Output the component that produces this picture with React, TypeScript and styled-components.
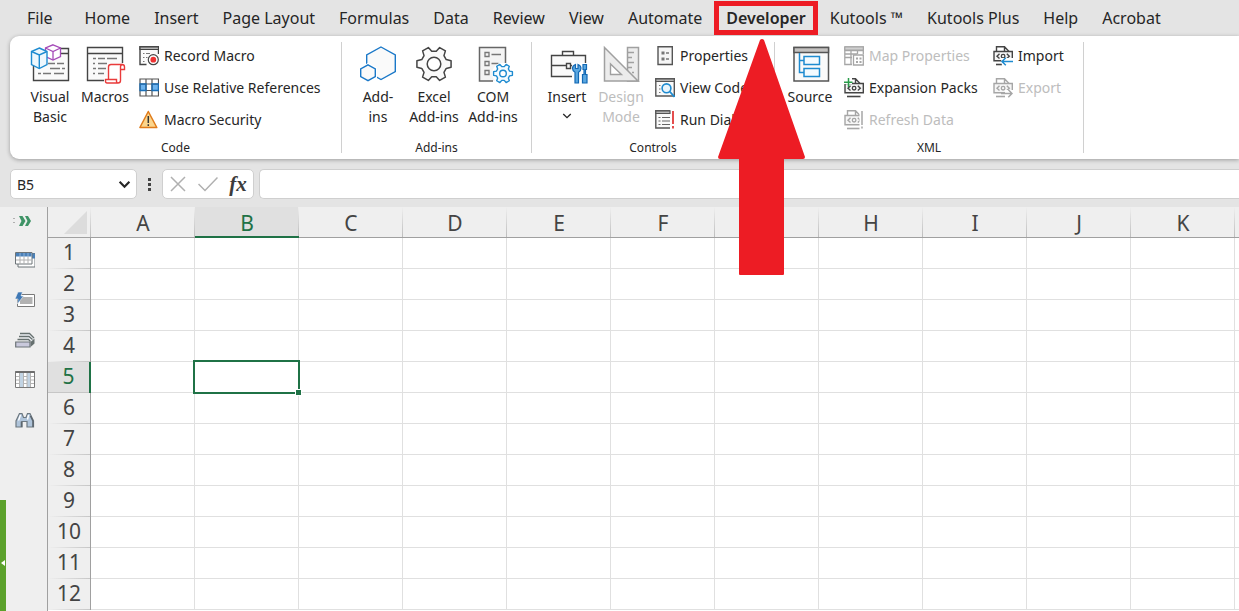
import React from "react";
import styled, { createGlobalStyle, css } from "styled-components";

const GlobalStyle = createGlobalStyle`
  *, *::before, *::after { box-sizing: border-box; }
  html, body { margin: 0; padding: 0; }
  body {
    background: #e4e4e4;
    color: #262626;
    font-family: "Noto Sans", "Open Sans", sans-serif;
    font-size: 14px;
    overflow: hidden;
  }
  button, input { font: inherit; color: inherit; }
  svg { display: block; flex: none; }
`;

const RED = "#ed1c24";
const GREEN = "#1f7246";
const BLUE = "#1e8bd0";
const DARK = "#444444";
const PALE = "#a6a6a6";

const Page = styled.div`
  display: flex;
  flex-direction: column;
  min-height: 100vh;
`;

/* ---------- Ribbon tabs ---------- */

const TabBar = styled.nav`
  display: flex;
  height: 36px;
  padding-left: 15px;
`;

const Tab = styled.button<{ $active?: boolean }>`
  position: relative;
  flex: none;
  height: 36px;
  padding: 0 12px;
  border: 0;
  background: none;
  font-size: 16px;
  line-height: 36px;
  white-space: nowrap;
  font-weight: ${(p) => (p.$active ? 600 : 400)};
  &:first-child { margin-right: 8px; }
`;

const Callout = styled.span`
  position: absolute;
  z-index: 5;
  top: 1px;
  bottom: 1px;
  left: 0;
  right: 0;
  border: 5px solid ${RED};
  pointer-events: none;
`;

const Arrow = styled.svg`
  position: absolute;
  z-index: 5;
  top: 38px;
  left: 4px;
  pointer-events: none;
`;

/* ---------- Ribbon ---------- */

const Ribbon = styled.section`
  display: flex;
  height: 123px;
  margin-left: 10px;
  background: #ffffff;
  border-radius: 9px 0 0 9px;
  box-shadow: 0 1px 4px rgba(0, 0, 0, 0.32);
`;

const Group = styled.div<{ $width: number; $indent: number }>`
  display: flex;
  flex-direction: column;
  flex: 0 0 ${(p) => p.$width}px;
  min-width: 0;
  padding-top: 4px;
  & > div { padding-left: ${(p) => p.$indent}px; }
`;

const GroupBody = styled.div`
  display: flex;
  height: 96px;
`;

const GroupLabel = styled.span`
  text-align: center;
  font-size: 12px;
  line-height: 23px;
`;

const Divider = styled.div`
  flex: 0 0 1px;
  margin: 6px 0;
  background: #d0d0d0;
`;

const BigTool = styled.button<{ $width: number }>`
  display: flex;
  flex-direction: column;
  align-items: center;
  flex: 0 0 ${(p) => p.$width}px;
  padding: 4px 0 0;
  border: 0;
  background: none;
  line-height: 20px;
  white-space: nowrap;
  &:disabled { color: #bdbdbd; }
  & > svg:first-child { margin-bottom: 3px; }
`;

const MenuMark = styled.span`
  display: flex;
  align-items: center;
  height: 18px;
`;

const Stack = styled.div<{ $width?: number; $flush?: boolean }>`
  display: flex;
  flex-direction: column;
  margin-left: ${(p) => (p.$flush ? 0 : 7)}px;
  ${(p) => p.$width && css`flex: 0 0 ${p.$width}px;`}
`;

const SmallTool = styled.button`
  display: flex;
  align-items: center;
  gap: 5px;
  height: 32px;
  padding: 0;
  border: 0;
  background: none;
  line-height: 20px;
  white-space: nowrap;
  &:disabled { color: #bdbdbd; }
`;

/* ---------- Formula bar ---------- */

const FormulaRow = styled.div`
  display: flex;
  align-items: flex-start;
  height: 48px;
  padding: 10px 0 0 10px;
`;

const boxed = css`
  height: 30px;
  background: #ffffff;
  border: 1px solid #cfcfcf;
  border-radius: 5px;
`;

const NameBox = styled.div`
  ${boxed}
  display: flex;
  align-items: center;
  flex: 0 0 127px;
  min-width: 0;
`;

const NameInput = styled.input`
  flex: 1;
  width: 100%;
  min-width: 0;
  padding: 0 0 0 6px;
  border: 0;
  background: none;
  outline: none;
`;

const IconButton = styled.button<{ $size: number }>`
  display: flex;
  align-items: center;
  justify-content: center;
  flex: 0 0 ${(p) => p.$size}px;
  height: 28px;
  padding: 0;
  border: 0;
  background: none;
`;

const Dots = styled.div`
  display: flex;
  flex-direction: column;
  align-items: center;
  justify-content: center;
  gap: 2px;
  flex: 0 0 25px;
  height: 30px;
  & > i { width: 3px; height: 3px; background: #444444; }
`;

const FxBox = styled.div`
  ${boxed}
  display: flex;
  flex: 0 0 92px;
  margin-right: 5px;
`;

const FxText = styled.span`
  font-family: "Liberation Serif", serif;
  font-style: italic;
  font-weight: 700;
  font-size: 21px;
  line-height: 24px;
  color: #3c3c3c;
`;

const FormulaInput = styled.input`
  ${boxed}
  flex: 1;
  min-width: 0;
  padding: 0 8px;
  border-right: 0;
  border-radius: 5px 0 0 5px;
  outline: none;
`;

/* ---------- Workspace ---------- */

const Workspace = styled.main`
  display: flex;
  flex: 1;
`;

const SidePane = styled.aside`
  position: relative;
  display: flex;
  flex-direction: column;
  flex: 0 0 48px;
  padding-left: 2px;
  background: #efefef;
  border-right: 1px solid #a0a0a0;
`;

const Expander = styled.button`
  display: flex;
  align-items: center;
  justify-content: center;
  height: 28px;
  margin-bottom: 5px;
  padding: 0 3px 0 0;
  border: 0;
  background: none;
`;

const PaneButton = styled.button`
  display: flex;
  align-items: center;
  justify-content: center;
  height: 40px;
  padding: 0 0 0 1px;
  border: 0;
  background: none;
`;

const PaneToggle = styled.button`
  position: absolute;
  left: 0;
  bottom: 0;
  display: flex;
  align-items: center;
  width: 6px;
  height: 111px;
  padding: 14px 0 0;
  border: 0;
  background: #5ba12b;
`;

const SheetArea = styled.div`
  flex: 1;
  min-width: 0;
  overflow: hidden;
  background: #ffffff;
`;

const Sheet = styled.table`
  table-layout: fixed;
  width: 1291px;
  border-collapse: separate;
  border-spacing: 0;
`;

const headCell = css`
  height: 31px;
  padding: 0;
  font-size: 21px;
  font-weight: 400;
  color: #444444;
  text-align: center;
  vertical-align: top;
  background: #efefef;
`;

const ColumnHead = styled.th<{ $active?: boolean }>`
  ${headCell}
  padding-top: 3px;
  line-height: 26px;
  border-bottom: 1px solid #a0a0a0;
  background: linear-gradient(#efefef, #bdbdbd) right / 1px 100% no-repeat #efefef;
  ${(p) =>
    p.$active &&
    css`
      color: ${GREEN};
      background: linear-gradient(#efefef, #bdbdbd) right / 1px 100% no-repeat #e0e0e0;
      border-bottom: 2px solid ${GREEN};
    `}
`;

const RowHead = styled.th<{ $active?: boolean }>`
  ${headCell}
  padding-top: 1px;
  line-height: 27px;
  border-right: 1px solid #a0a0a0;
  background: linear-gradient(to right, #efefef, #c6c6c6) bottom / 100% 1px no-repeat #efefef;
  ${(p) =>
    p.$active &&
    css`
      color: ${GREEN};
      background: linear-gradient(#c6c6c6, #c6c6c6) bottom / 100% 1px no-repeat #e0e0e0;
      border-right: 2px solid ${GREEN};
    `}
`;

const Corner = styled.th`
  ${headCell}
  padding-top: 4px;
  border-bottom: 1px solid #a0a0a0;
  background: linear-gradient(#efefef, #bdbdbd) right / 1px 100% no-repeat #efefef;
  & > svg { margin: 0 0 0 16px; }
`;

const Cell = styled.td`
  position: relative;
  height: 31px;
  padding: 0;
  border-right: 1px solid #e0e0e0;
  border-bottom: 1px solid #e0e0e0;
`;

const Selection = styled.div`
  position: absolute;
  z-index: 2;
  inset: -2px;
  border: 2px solid ${GREEN};
  &::after {
    content: "";
    position: absolute;
    right: -4px;
    bottom: -4px;
    width: 7px;
    height: 7px;
    background: ${GREEN};
    border: 1px solid #ffffff;
  }
`;

/* ---------- Icons ---------- */

const Big = ({ children }: { children: React.ReactNode }) => (
  <svg width="40" height="40" viewBox="0 0 40 40" fill="none" overflow="visible" aria-hidden="true">
    {children}
  </svg>
);

const Small = ({ children }: { children: React.ReactNode }) => (
  <svg width="20" height="20" viewBox="0 0 20 20" fill="none" aria-hidden="true">
    {children}
  </svg>
);

const gearPath = (cx: number, cy: number, outer: number, root: number) => {
  const pts: string[] = [];
  for (let i = 0; i < 6; i++) {
    const steps: [number, number][] = [
      [-20, root],
      [-11, outer],
      [11, outer],
      [20, root],
    ];
    for (const [a, r] of steps) {
      const t = ((i * 60 + a) * Math.PI) / 180;
      pts.push(`${(cx + r * Math.cos(t)).toFixed(2)} ${(cy + r * Math.sin(t)).toFixed(2)}`);
    }
  }
  return `M${pts.join("L")}Z`;
};

const VisualBasicIcon = () => (
  <Big>
    <path d="M3.5 22V36.500H38.500V4.500H30V9.500H38.500" fill="#fafafa" stroke={DARK} strokeWidth="1.4" />
    <path d="M27 19.500h7M18 19.500h7M20 24.500h10M32 24.500h3M8 29.500h3M13 29.500h8M24 29.500h10" stroke="#777" strokeWidth="1.3" />
    <path d="M23 .8L30.500 4V12.500L23 16L15.500 12.500V4Z" fill="#fff" stroke="#a54bb8" strokeWidth="1.3" />
    <path d="M15.500 4L23 7.500L30.500 4M23 7.500V16" stroke="#a54bb8" strokeWidth="1.3" />
    <path d="M9.300 4L17 7.500V20.500L9.300 24.500L1.500 20.500V7.500Z" fill="#eef7fd" stroke={BLUE} strokeWidth="1.4" />
    <path d="M1.500 7.500L9.300 11L17 7.500M9.300 11V24.500" stroke={BLUE} strokeWidth="1.4" />
  </Big>
);

const MacrosIcon = () => (
  <Big>
    <path d="M2.500 3.500H37.500V36.500H2.500Z" fill="#fafafa" />
    <path d="M20 36.500H2.500V3.500H37.500V19M2.500 9.500H37.500" stroke={DARK} strokeWidth="1.4" />
    <path d="M8 14.500h3M13 14.500h7M22 14.500h10M8 19.500h2M13 19.500h9M8 24.500h3M13 24.500h8M8 29.500h2M13 29.500h6" stroke="#777" strokeWidth="1.300" />
    <path d="M22.500 33V23q0-2.500 2.500-2.500H37.500V37q0 3-3 3H19V33Z" fill="#fff" />
    <path d="M23.500 35V23q0-2.500 2.500-2.500H37q2.500 0 2.500 2.500v2.500H35.500" stroke="#e93b3b" strokeWidth="1.4" />
    <path d="M35.500 25.500V23q0-2.500 2-2.500M35.500 25V36.500q0 2.500-2.500 2.500H22q-1.500 0-1.500-2V35.500H31.500V37q0 2 1.500 2" stroke="#e93b3b" strokeWidth="1.4" />
  </Big>
);

const AddInsIcon = () => (
  <Big>
    <path d="M23 3L37.300 11V27.500L23 35.500L8.700 27.500V11Z" fill="#fafafa" stroke="#1a78c8" strokeWidth="1.400" />
    <path d="M10 19L19 23.500V34L10 39L1 34V23.500Z" fill="#fff" />
    <path d="M10 20.800L17.300 24.800V32.700L10 36.700L2.700 32.700V24.800Z" fill="#fafafa" stroke="#1a78c8" strokeWidth="1.400" />
  </Big>
);

const ExcelAddInsIcon = () => (
  <Big>
    <path d={gearPath(20, 20, 17.4, 13)} fill="#fafafa" stroke={DARK} strokeWidth="1.5" strokeLinejoin="round" />
    <circle cx="20" cy="20" r="6.800" fill="#fff" stroke={DARK} strokeWidth="1.500" />
  </Big>
);

const ComAddInsIcon = () => (
  <Big>
    <path d="M6.500 3.500H32.500V37H6.500Z" fill="#f4f4f4" />
    <path d="M20 37H6.500V3.500H32.500V19" stroke="#666" strokeWidth="1.500" />
    <path d="M12 8.500h4v4h-4ZM12 17.500h4v4h-4ZM12 26.500h4v4h-4Z" stroke="#777" strokeWidth="1.300" />
    <path d="M18.500 10.500h9.500M18.500 19.500h7" stroke="#777" strokeWidth="1.300" />
    <circle cx="30" cy="29.500" r="10.800" fill="#fff" />
    <path d={gearPath(30, 29.5, 9.6, 7)} fill="#f4fbff" stroke={BLUE} strokeWidth="1.4" strokeLinejoin="round" />
    <circle cx="30" cy="29.500" r="3.300" fill="#fff" stroke={BLUE} strokeWidth="1.400" />
  </Big>
);

const InsertIcon = () => (
  <Big>
    <path d="M4.500 11.500H38.500V32.500H4.500Z" fill="#fafafa" />
    <path d="M38.500 19V11.500H4.500V32.500H25M15.500 11.500V7.500H26.500V11.500M4.500 21.500H19M23.500 21.500H26" stroke={DARK} strokeWidth="1.400" />
    <path d="M19.500 19.500h4v5h-4Z" stroke={DARK} strokeWidth="1.400" />
    <path d="M24.500 19h15.500v21h-13V30Z" fill="#fff" />
    <path d="M28.500 20.500q-3 1.200-3 3.800q0 2.500 2.500 4V39h3.500V28.300q2.500-1.500 2.500-4q0-2.600-3-3.800v4h-2.500Z" fill="#5aa7e0" stroke="#1268b4" strokeWidth="1.200" />
    <path d="M36 20.500h3.500v5h-1v5h1.500v8.500h-4.500v-8.500h1.500v-5h-1Z" fill="#5aa7e0" stroke="#1268b4" strokeWidth="1.200" />
  </Big>
);

const DesignIcon = () => (
  <Big>
    <path d="M26.500 3.500H37.500V37H26.500Z" fill="#ececec" stroke="#a0a0a0" strokeWidth="1.500" />
    <path d="M27 8.500h6M27 13.500h4M27 18.500h6M27 23.500h4M31 28.500h2" stroke="#a0a0a0" strokeWidth="1.300" />
    <path d="M3.500 3.500V37H37Z" fill="#ececec" stroke="#a0a0a0" strokeWidth="1.500" />
    <path d="M9.500 20V30.500H20.500Z" fill="#fff" stroke="#a0a0a0" strokeWidth="1.400" />
  </Big>
);

const SourceIcon = () => (
  <Big>
    <path d="M4 3.500H38.500V37H4Z" fill="#fafafa" stroke="#555" strokeWidth="1.500" />
    <path d="M4 3.500H38.500V8.500H4Z" fill="#c4c2c0" stroke="#555" strokeWidth="1.400" />
    <path d="M9.500 9V28.500H14M9.500 16.500H14" stroke={BLUE} strokeWidth="1.500" />
    <path d="M14 12.500H29.500V20.500H14ZM14 24.500H29.500V32.500H14Z" fill="#f4fbff" stroke={BLUE} strokeWidth="1.500" />
  </Big>
);

const RecordIcon = () => (
  <Small>
    <path d="M7.500 18.500H1V.8H19.500V8" fill="#fafafa" stroke={DARK} strokeWidth="1.400" />
    <path d="M1 .8H19.500V3.500H1Z" fill="#b5b5b5" stroke={DARK} strokeWidth="1.200" />
    <path d="M4 7.500h1.500M7 7.500h4M4 11.500h1.500M4 15.500h1.500M7 11.500h1.500" stroke="#777" />
    <circle cx="14.300" cy="13.700" r="5" fill="#fff" stroke={DARK} strokeWidth="1.200" />
    <circle cx="14.300" cy="13.700" r="2.900" fill="#ee3333" />
  </Small>
);

const RelativeIcon = () => (
  <Small>
    <path d="M1 1H19.500V18H1Z" fill="#fff" />
    <path d="M1 6H7V12.500H1ZM13 6H19.500V12.500H13Z" fill="#6db3ee" />
    <path d="M1 1H19.500V18H1ZM7 1V18M13 1V18M1 6H19.500M1 12.500H19.500" stroke="#555" strokeWidth="1.200" />
    <path d="M1 6H7V12.500H1ZM13 6H19.500V12.500H13Z" stroke="#1a6fb8" strokeWidth="1.300" />
  </Small>
);

const SecurityIcon = () => (
  <Small>
    <path d="M9.300 1.500L17.800 17.500H.9Z" fill="#fbd58c" stroke="#e07b1a" strokeWidth="1.500" strokeLinejoin="round" />
    <path d="M9.300 6V13M9.300 14.200V16" stroke="#333" strokeWidth="1.500" />
  </Small>
);

const PropertiesIcon = () => (
  <Small>
    <path d="M3 .7H17.300V18.500H3Z" fill="#f6f6f6" stroke="#555" strokeWidth="1.400" />
    <path d="M6.500 5.500h3v3h-3ZM6.500 11.500h3v3h-3Z" fill="#777" />
    <path d="M11 7h3M11 13h3" stroke="#777" strokeWidth="1.300" />
  </Small>
);

const CodeIcon = () => (
  <Small>
    <path d="M.8 .8H19.300V18H.8Z" fill="#fafafa" stroke="#555" strokeWidth="1.400" />
    <path d="M.8 .8H19.300V3.500H.8Z" fill="#b5b5b5" stroke="#555" strokeWidth="1.200" />
    <path d="M4 7.500h1.500M4 11h1.500M4 14.500h1.500" stroke="#777" />
    <circle cx="11.500" cy="10.300" r="4.400" fill="#e8f5fd" stroke={BLUE} strokeWidth="1.600" />
    <path d="M14.700 13.500L19.500 18.800" stroke={BLUE} strokeWidth="1.800" />
  </Small>
);

const DialogIcon = () => (
  <Small>
    <path d="M15 18H.8V.8H15" fill="#fafafa" stroke="#555" strokeWidth="1.400" />
    <path d="M.8 .8H15V3.500H.8Z" fill="#b5b5b5" stroke="#555" strokeWidth="1.200" />
    <path d="M3.500 7.500h2M7 7.500h8M3.500 11h2M7 11h8M3.500 14.500h2M7 14.500h8" stroke="#666" strokeWidth="1.200" />
    <path d="M18 1V14M18 16V18.500" stroke="#e23b3b" strokeWidth="1.800" />
  </Small>
);

const MapIcon = () => (
  <Small>
    <path d="M.8 .8H19.300V8M8 18.500H.8V.8M.8 4.500H19.300M.8 11.500H8M7 4.500V18.500M13.500 4.500V8M.8 8H13" stroke={PALE} strokeWidth="1.300" />
    <path d="M.8 .8H19.300V4H.8Z" fill="#d0d0d0" stroke={PALE} strokeWidth="1.200" />
    <path d="M9.500 9H19.300V19H9.500Z" fill="#fff" stroke={PALE} strokeWidth="1.300" />
    <path d="M12 11.500h2v2h-2ZM12 15h2v2h-2ZM15.500 11.500h2v2h-2ZM15.500 15h2v2h-2Z" fill={PALE} />
  </Small>
);

const XmlIcon = ({ kind }: { kind: "expand" | "refresh" | "import" | "export" }) => {
  const off = kind === "refresh" || kind === "export";
  const ink = off ? PALE : DARK;
  return (
    <Small>
      <path d="M3.500 5.500V.8H11.500L16 5.500M11.500 .8V5.500" stroke={ink} strokeWidth="1.400" />
      <path d="M1 5.500H19.300V14.800H1Z" fill="#f6f6f6" stroke={ink} strokeWidth="1.400" />
      <path d="M6.500 7.800L4 10.200L6.500 12.600M13.800 7.800L16.300 10.200L13.800 12.600" stroke={ink} strokeWidth="1.400" />
      <circle cx="10.100" cy="10.200" r="1.800" stroke={ink} strokeWidth="1.300" />
      <path d="M3 18.500H16.500" stroke={ink} strokeWidth="1.600" />
      {kind === "expand" && (
        <>
          <path d="M0 0H8V6H0Z" fill="#fff" />
          <path d="M4.500 0V9M0 4.200H8.500" stroke="#2a9d4a" strokeWidth="1.500" />
        </>
      )}
      {kind === "refresh" && (
        <>
          <path d="M15.500 0H20V20H15.500Z" fill="#fff" />
          <path d="M18 1V15M18 16.500V18.500" stroke={ink} strokeWidth="1.500" />
        </>
      )}
      {kind === "import" && (
        <>
          <path d="M8 12H20V20H9Z" fill="#fff" />
          <path d="M20 15.500H9M12.800 11.800L9 15.500L12.800 19.200" stroke={BLUE} strokeWidth="1.500" />
        </>
      )}
      {kind === "export" && (
        <>
          <path d="M12 12H20V20H12Z" fill="#fff" />
          <path d="M8 15.500H19M15.300 11.800L19 15.500L15.300 19.200" stroke={ink} strokeWidth="1.500" />
        </>
      )}
    </Small>
  );
};

const Chevron = ({ size, weight }: { size: number; weight: number }) => (
  <svg width={size} height={size} viewBox="0 0 12 12" fill="none" aria-hidden="true">
    <path d="M1.500 3.500L6 8L10.500 3.500" stroke="#262626" strokeWidth={weight} />
  </svg>
);

const SheetsIcon = () => (
  <Small>
    <path d="M3 3.500H20V17H3Z" fill="#fff" stroke="#6d7478" />
    <path d="M17 3.500h3v5h-3Z" fill="#4a80b8" />
    <path d="M.5 2.500H17V14H.5Z" fill="#fff" stroke="#6d7478" />
    <path d="M1 3H16.500V6.500H1Z" fill="#4a80b8" />
    <path d="M1 10H16.500M5 6.500V14M9 6.500V14M13 6.500V14" stroke="#b0b0b0" />
    <path d="M5 3V6M9 3V6M13 3V6" stroke="#8fb3d8" />
  </Small>
);

const AutoTextIcon = () => (
  <Small>
    <path d="M2.500 4.500H19.500V16.500H2.500Z" fill="#fff" stroke="#7a7a7a" />
    <path d="M5 7H17.500V14H5Z" fill="#b2b2b2" />
    <path d="M3 2H7.500L6 6H8.500L2.500 14L3 9H0Z" fill="#3f78b5" stroke="#efefef" strokeWidth=".6" />
  </Small>
);

const StackIcon = () => (
  <Small>
    <path d="M5.500 4V3H14L19.500 8V13L15 17" fill="#eef0f4" />
    <path d="M5 3.500H14.500L19 8M4 6.500H14L17.500 9.500M2.500 9.500H13.500L15.500 11.500" stroke="#66706f" strokeWidth="1.300" />
    <path d="M15.500 12L19.500 8.500V13.500L15.500 17Z" fill="#66706f" />
    <path d="M.7 12H15V17H.7Z" fill="#c9c9dc" stroke="#6d7478" strokeWidth="1.200" />
  </Small>
);

const ColumnsIcon = () => (
  <Small>
    <path d="M.5 1.500H19.500V17.500H.5Z" fill="#fff" stroke="#7a7a7a" />
    <path d="M5 3H8.500V17H5ZM12 3H15.500V17H12Z" fill="#c2d4e4" />
    <path d="M1 6.500H5M1 10H5M1 13.500H5M8.500 6.500H12M8.500 10H12M8.500 13.500H12M15.500 6.500H19M15.500 10H19M15.500 13.500H19M4.500 3V17M8.500 3V17M12 3V17M15.500 3V17" stroke="#b4b4b4" />
    <path d="M.5 2H19.500" stroke="#6d6d6d" strokeWidth="2" />
  </Small>
);

const BinocularsIcon = () => (
  <Small>
    <path d="M4.500 3.500L1 11V17H7V11.500H12V17H18.500V11L15 3.500H12.500L11 7.500H8.500L7 3.500Z" fill="#afc4da" stroke="#6d7880" strokeWidth="1.200" />
    <path d="M5.500 5L3.500 10.500M13.500 5L12.500 9.500" stroke="#fff" strokeWidth="1.400" />
    <path d="M18 11V17M6.500 11.500V17M15.500 6L18 11" stroke="#5c666e" strokeWidth="1.600" />
  </Small>
);

/* ---------- Data ---------- */

const tabs = [
  "File", "Home", "Insert", "Page Layout", "Formulas", "Data", "Review", "View",
  "Automate", "Developer", "Kutools ™", "Kutools Plus", "Help", "Acrobat",
];
const columns = ["A", "B", "C", "D", "E", "F", "G", "H", "I", "J", "K", "L"];
const rows = Array.from({ length: 12 }, (_, i) => i + 1);

const paneTools = [
  { label: "Workbook and sheet", icon: <SheetsIcon /> },
  { label: "AutoText", icon: <AutoTextIcon /> },
  { label: "Name manager", icon: <StackIcon /> },
  { label: "Column list", icon: <ColumnsIcon /> },
  { label: "Find and replace", icon: <BinocularsIcon /> },
];

export default function App() {
  return (
    <>
      <GlobalStyle />
      <Page>
        <TabBar aria-label="Ribbon tabs">
          {tabs.map((name) => {
            const active = name === "Developer";
            return (
              <Tab key={name} type="button" $active={active}>
                {name}
                {active && (
                  <>
                    <Callout />
                    <Arrow width="88" height="238" viewBox="0 0 88 238" aria-hidden="true">
                      <path
                        d="M42 2q2-2 4 0L87 119q0 2-2 2H66V236q0 1-1 1H22q-1 0-1-1V121H2q-2 0-2-2Z"
                        fill={RED}
                      />
                    </Arrow>
                  </>
                )}
              </Tab>
            );
          })}
        </TabBar>

        <Ribbon aria-label="Developer">
          <Group $width={331} $indent={12}>
            <GroupBody>
              <BigTool type="button" $width={56}>
                <VisualBasicIcon />
                <span>Visual<br />Basic</span>
              </BigTool>
              <BigTool type="button" $width={54}>
                <MacrosIcon />
                <span>Macros</span>
              </BigTool>
              <Stack>
                <SmallTool type="button"><RecordIcon />Record Macro</SmallTool>
                <SmallTool type="button"><RelativeIcon />Use Relative References</SmallTool>
                <SmallTool type="button"><SecurityIcon />Macro Security</SmallTool>
              </Stack>
            </GroupBody>
            <GroupLabel>Code</GroupLabel>
          </Group>
          <Divider />

          <Group $width={189} $indent={8}>
            <GroupBody>
              <BigTool type="button" $width={56}>
                <AddInsIcon />
                <span>Add-<br />ins</span>
              </BigTool>
              <BigTool type="button" $width={56}>
                <ExcelAddInsIcon />
                <span>Excel<br />Add-ins</span>
              </BigTool>
              <BigTool type="button" $width={62}>
                <ComAddInsIcon />
                <span>COM<br />Add-ins</span>
              </BigTool>
            </GroupBody>
            <GroupLabel>Add-ins</GroupLabel>
          </Group>
          <Divider />

          <Group $width={242} $indent={8}>
            <GroupBody>
              <BigTool type="button" $width={54}>
                <InsertIcon />
                <span>Insert</span>
                <MenuMark><Chevron size={10} weight={1.6} /></MenuMark>
              </BigTool>
              <BigTool type="button" $width={54} disabled>
                <DesignIcon />
                <span>Design<br />Mode</span>
              </BigTool>
              <Stack>
                <SmallTool type="button"><PropertiesIcon />Properties</SmallTool>
                <SmallTool type="button"><CodeIcon />View Code</SmallTool>
                <SmallTool type="button"><DialogIcon />Run Dialog</SmallTool>
              </Stack>
            </GroupBody>
            <GroupLabel>Controls</GroupLabel>
          </Group>
          <Divider />

          <Group $width={308} $indent={8}>
            <GroupBody>
              <BigTool type="button" $width={54}>
                <SourceIcon />
                <span>Source</span>
              </BigTool>
              <Stack $width={149}>
                <SmallTool type="button" disabled><MapIcon />Map Properties</SmallTool>
                <SmallTool type="button"><XmlIcon kind="expand" />Expansion Packs</SmallTool>
                <SmallTool type="button" disabled><XmlIcon kind="refresh" />Refresh Data</SmallTool>
              </Stack>
              <Stack $flush>
                <SmallTool type="button"><XmlIcon kind="import" />Import</SmallTool>
                <SmallTool type="button" disabled><XmlIcon kind="export" />Export</SmallTool>
              </Stack>
            </GroupBody>
            <GroupLabel>XML</GroupLabel>
          </Group>
          <Divider />
        </Ribbon>

        <FormulaRow>
          <NameBox>
            <NameInput aria-label="Name box" defaultValue="B5" />
            <IconButton type="button" $size={24} aria-label="Show names"><Chevron size={13} weight={2} /></IconButton>
          </NameBox>
          <Dots><i /><i /><i /></Dots>
          <FxBox>
            <IconButton type="button" $size={30} aria-label="Cancel">
              <svg width="20" height="20" viewBox="0 0 20 20" fill="none">
                <path d="M3 3L17 17M17 3L3 17" stroke="#b0b0b0" strokeWidth="1.500" />
              </svg>
            </IconButton>
            <IconButton type="button" $size={30} aria-label="Enter">
              <svg width="20" height="20" viewBox="0 0 20 20" fill="none">
                <path d="M.5 10L7 16.500L19.500 3.500" stroke="#b0b0b0" strokeWidth="1.500" />
              </svg>
            </IconButton>
            <IconButton type="button" $size={30} aria-label="Insert function"><FxText>fx</FxText></IconButton>
          </FxBox>
          <FormulaInput aria-label="Formula" />
        </FormulaRow>

        <Workspace>
          <SidePane>
            <Expander type="button" aria-label="Expand pane">
              <svg width="20" height="12" viewBox="0 0 20 12" fill="none">
                <path d="M0 3.500h2M0 7.500h2" stroke="#b0b0b0" />
                <path d="M6 1H9.500L12.500 6L9.500 11H6L8.500 6ZM12 1H15L18 6L15 11H12L14.500 6Z" fill="#3f9467" />
              </svg>
            </Expander>
            {paneTools.map((t) => (
              <PaneButton key={t.label} type="button" aria-label={t.label}>{t.icon}</PaneButton>
            ))}
            <PaneToggle type="button" aria-label="Collapse pane">
              <svg width="6" height="8" viewBox="0 0 6 8"><path d="M5 1V7L1 4Z" fill="#fff" /></svg>
            </PaneToggle>
          </SidePane>

          <SheetArea>
            <Sheet>
              <colgroup>
                <col style={{ width: 43 }} />
                {columns.map((c) => <col key={c} style={{ width: 104 }} />)}
              </colgroup>
              <thead>
                <tr>
                  <Corner aria-label="Select all">
                    <svg width="23" height="23" viewBox="0 0 23 23"><path d="M23 0V23H0Z" fill="#dcdcdc" /></svg>
                  </Corner>
                  {columns.map((c) => (
                    <ColumnHead key={c} scope="col" $active={c === "B"}>{c === "L" ? "" : c}</ColumnHead>
                  ))}
                </tr>
              </thead>
              <tbody>
                {rows.map((r) => (
                  <tr key={r}>
                    <RowHead scope="row" $active={r === 5}>{r}</RowHead>
                    {columns.map((c) => (
                      <Cell key={c}>{r === 5 && c === "B" && <Selection />}</Cell>
                    ))}
                  </tr>
                ))}
              </tbody>
            </Sheet>
          </SheetArea>
        </Workspace>
      </Page>
    </>
  );
}
